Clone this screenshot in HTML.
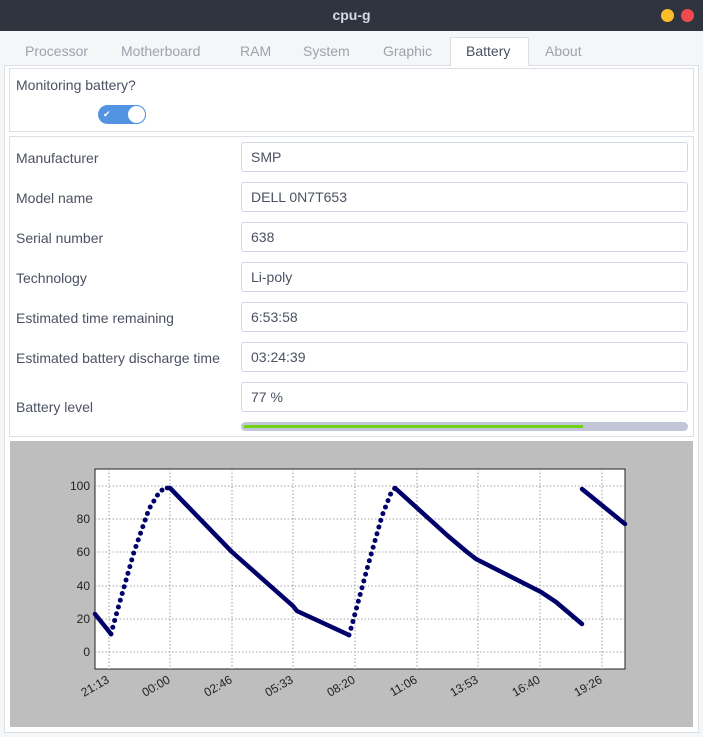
<!DOCTYPE html>
<html><head><meta charset="utf-8"><style>
*{margin:0;padding:0;box-sizing:border-box}
body{width:703px;height:737px;background:#f5f6f7;font-family:"Liberation Sans","DejaVu Sans",sans-serif;position:relative;overflow:hidden;color:#4b5162}
.a{position:absolute}
.title{left:0;top:0;width:703px;height:31px;background:#2f343f;color:#d3dae3;font-weight:bold;font-size:14px;text-align:center;line-height:31px}
.dot{width:13px;height:13px;border-radius:50%;top:9px}
.tab{top:43px;font-size:14px;color:#9da3ad}
.panel{background:#fff;border:1px solid #dcdfe3}
.lbl{left:16px;font-size:14px;color:#4b5162}
.fld{left:241px;width:447px;height:30px;border:1px solid #cfd6e6;border-radius:3px;background:#fff;font-size:14px;padding-left:9px;line-height:28px;color:#4b5162}
</style></head><body>
<div class="a title">cpu-g</div>
<div class="a dot" style="left:661px;background:#fdbe2a"></div>
<div class="a dot" style="left:681px;background:#f04a50"></div>
<div class="a" style="left:4px;top:65px;width:695px;height:668px;border:1px solid #dcdfe3;background:#fff"></div>
<div class="a" style="left:450px;top:37px;width:79px;height:29px;background:#fff;border:1px solid #dcdfe3;border-bottom:none"></div>
<div class="a tab" style="left:25px">Processor</div>
<div class="a tab" style="left:121px">Motherboard</div>
<div class="a tab" style="left:240px">RAM</div>
<div class="a tab" style="left:303px">System</div>
<div class="a tab" style="left:383px">Graphic</div>
<div class="a tab" style="left:466px;color:#4b5162">Battery</div>
<div class="a tab" style="left:545px">About</div>
<div class="a panel" style="left:9px;top:68px;width:685px;height:64px"></div>
<div class="a lbl" style="top:77px">Monitoring battery?</div>
<div class="a" style="left:98px;top:105px;width:48px;height:19px;border-radius:10px;background:#5294e2"></div>
<div class="a" style="left:127px;top:105px;width:19px;height:19px;border-radius:50%;background:#fff;border:1px solid #5294e2"></div>
<div class="a" style="left:103px;top:108px;color:#fff;font-size:9px;line-height:12px;font-weight:bold">✔</div>
<div class="a panel" style="left:9px;top:136px;width:685px;height:301px"></div>
<div class="a lbl" style="top:150px">Manufacturer</div><div class="a fld" style="top:142px">SMP</div>
<div class="a lbl" style="top:190px">Model name</div><div class="a fld" style="top:182px">DELL 0N7T653</div>
<div class="a lbl" style="top:230px">Serial number</div><div class="a fld" style="top:222px">638</div>
<div class="a lbl" style="top:270px">Technology</div><div class="a fld" style="top:262px">Li-poly</div>
<div class="a lbl" style="top:310px">Estimated time remaining</div><div class="a fld" style="top:302px">6:53:58</div>
<div class="a lbl" style="top:350px">Estimated battery discharge time</div><div class="a fld" style="top:342px">03:24:39</div>
<div class="a lbl" style="top:399px">Battery level</div><div class="a fld" style="top:382px">77 %</div>
<div class="a" style="left:241px;top:422px;width:447px;height:9px;border-radius:5px;background:#c1c7d6"></div>
<div class="a" style="left:244px;top:425px;width:339px;height:3px;background:#73d216"></div>
<svg class="a" style="left:0;top:0" width="703" height="737">
<rect x="10" y="441" width="683" height="286" fill="#bebebe"/>
<rect x="95" y="469" width="530" height="200" fill="#fff" stroke="#222" stroke-width="1"/>
<g stroke="#888" stroke-width="0.8" stroke-dasharray="1.5,2">
<line x1="109" y1="469" x2="109" y2="669"/><line x1="170" y1="469" x2="170" y2="669"/><line x1="232" y1="469" x2="232" y2="669"/><line x1="293" y1="469" x2="293" y2="669"/><line x1="355" y1="469" x2="355" y2="669"/><line x1="417" y1="469" x2="417" y2="669"/><line x1="478" y1="469" x2="478" y2="669"/><line x1="540" y1="469" x2="540" y2="669"/><line x1="602" y1="469" x2="602" y2="669"/>
<line x1="95" y1="486" x2="625" y2="486"/><line x1="95" y1="519" x2="625" y2="519"/><line x1="95" y1="552" x2="625" y2="552"/><line x1="95" y1="586" x2="625" y2="586"/><line x1="95" y1="619" x2="625" y2="619"/><line x1="95" y1="652" x2="625" y2="652"/>
</g>
<g font-family="Liberation Sans,sans-serif" font-size="12" fill="#222" text-anchor="end">
<text x="90" y="490">100</text><text x="90" y="523">80</text><text x="90" y="556">60</text><text x="90" y="590">40</text><text x="90" y="623">20</text><text x="90" y="656">0</text>
<text transform="translate(110,682) rotate(-30)">21:13</text>
<text transform="translate(171,682) rotate(-30)">00:00</text>
<text transform="translate(233,682) rotate(-30)">02:46</text>
<text transform="translate(294,682) rotate(-30)">05:33</text>
<text transform="translate(356,682) rotate(-30)">08:20</text>
<text transform="translate(418,682) rotate(-30)">11:06</text>
<text transform="translate(479,682) rotate(-30)">13:53</text>
<text transform="translate(541,682) rotate(-30)">16:40</text>
<text transform="translate(603,682) rotate(-30)">19:26</text>
</g>
<g fill="none" stroke="#00006a" stroke-linecap="round" stroke-linejoin="round">
<polyline stroke-width="4.5" points="95,614 111,634"/>
<polyline stroke-width="5" stroke-dasharray="0 7" points="111,634 115,619 134,552 149,509 160,491 167,488"/>
<polyline stroke-width="4.5" points="167,488 170,488 232,552 293,606 297,611 349,635"/>
<polyline stroke-width="5" stroke-dasharray="0 7" points="349,635 352,625 367,569 382,516 391,493 395,488"/>
<polyline stroke-width="4.5" points="395,488 448,536 467,552 476,559 541,592 556,602 582,624"/>
<polyline stroke-width="4.5" points="582,489 625,524"/>
</g>
</svg>
</body></html>
